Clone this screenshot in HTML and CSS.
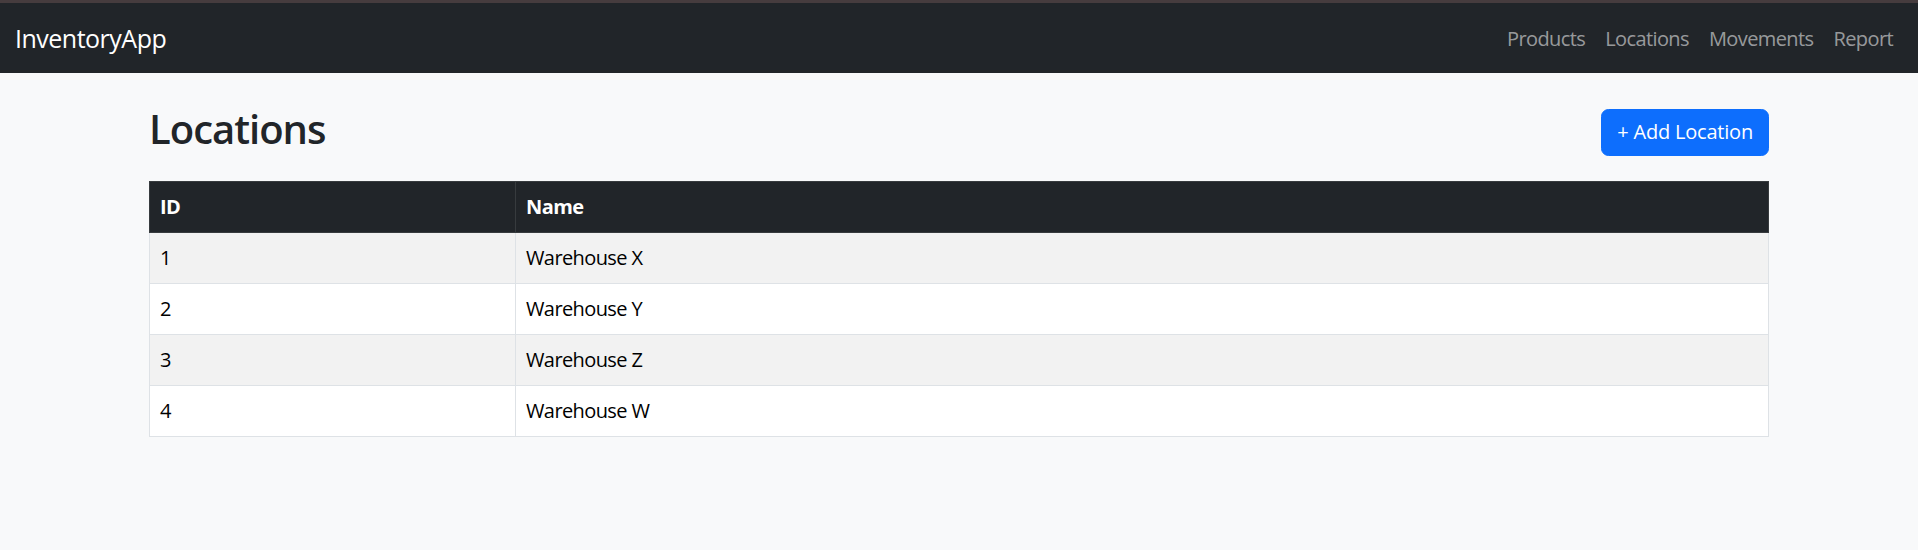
FILE: index.html
```html
<!DOCTYPE html>
<html lang="en">
<head>
<meta charset="utf-8">
<title>Locations - InventoryApp</title>
<link rel="stylesheet" href="styles.css">
</head>
<body>
<div class="topline"></div>
<nav class="navbar">
  <a class="brand" href="#">InventoryApp</a>
  <ul class="nav">
    <li><a href="#">Products</a></li>
    <li><a href="#">Locations</a></li>
    <li><a href="#">Movements</a></li>
    <li><a href="#">Report</a></li>
  </ul>
</nav>
<main class="container">
  <div class="page-head">
    <h2>Locations</h2>
    <a class="btn" href="#">+ Add Location</a>
  </div>
  <table class="table">
    <thead>
      <tr><th class="col-id">ID</th><th>Name</th></tr>
    </thead>
    <tbody>
      <tr><td>1</td><td>Warehouse X</td></tr>
      <tr><td>2</td><td>Warehouse Y</td></tr>
      <tr><td>3</td><td>Warehouse Z</td></tr>
      <tr><td>4</td><td>Warehouse W</td></tr>
    </tbody>
  </table>
</main>
</body>
</html>
```
FILE: styles.css
```css
* { box-sizing: border-box; }
html, body { margin: 0; padding: 0; }
body {
  background: #f8f9fa;
  color: #212529;
  font-family: "Segoe UI", "Open Sans", "Noto Sans", sans-serif;
  font-size: 20px;
  line-height: 1.5;
  letter-spacing: -0.03em;
}
.topline { height: 3px; background: #463c3e; }
.navbar {
  height: 70px;
  background: #212529;
  display: flex;
  align-items: center;
  justify-content: space-between;
  padding: 2px 15px 0;
}
.brand {
  color: #fff;
  text-decoration: none;
  font-size: 25px;
  line-height: 1.5;
  letter-spacing: -0.02em;
}
.nav { list-style: none; margin: 0; padding: 0; display: flex; }
.nav a {
  display: block;
  padding: 10px 10px;
  color: rgba(255,255,255,.55);
  text-decoration: none;
}
.container {
  width: 1650px;
  margin: 0 auto;
  padding: 30px 15px 0;
}
.page-head {
  display: flex;
  justify-content: space-between;
  align-items: center;
  margin-bottom: 20px;
}
.page-head h2 {
  margin: 2px 0 8px;
  font-size: 40px;
  font-weight: 600;
  line-height: 1.2;
  letter-spacing: -0.025em;
}
.btn {
  display: inline-block;
  background: #0d6efd;
  color: #fff;
  border: 1px solid #0d6efd;
  border-radius: 7.5px;
  padding: 7.5px 15px;
  font-size: 20px;
  line-height: 30px;
  letter-spacing: -0.01em;
  text-decoration: none;
}
.table {
  width: 100%;
  border-collapse: collapse;
  table-layout: fixed;
  background: #fff;
  color: #000;
}
.table th, .table td {
  padding: 10px;
  text-align: left;
  line-height: 30px;
  border: 1px solid #dee2e6;
}
.table thead th {
  background: #212529;
  color: #fff;
  font-weight: 700;
  border-color: #373b3e;
}
.table .col-id { width: 366px; }
.table tbody tr:nth-child(odd) td { background: #f2f2f2; }
```
